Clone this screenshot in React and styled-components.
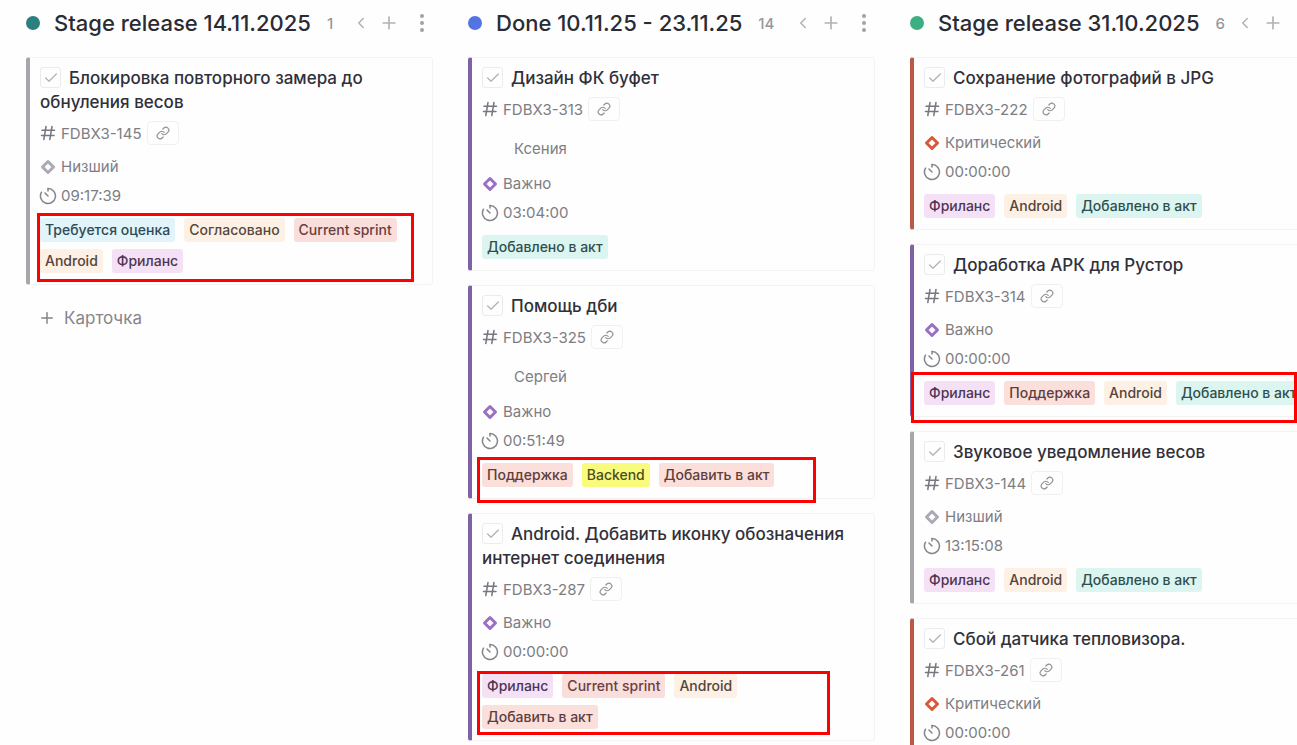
import React from 'react';
import styled, { createGlobalStyle } from 'styled-components';
import { Check, ChevronLeft, Link, Plus } from 'lucide-react';

const priorities = {
  lowest: { label: 'Низший', color: '#a9aab4', bar: '#a6a6ab' },
  important: { label: 'Важно', color: '#9a6fc4', bar: '#7f62a6' },
  critical: { label: 'Критический', color: '#d9583a', bar: '#b95a45' }
};

const tagStyles = {
  'Требуется оценка': { background: '#e0f4fa', color: '#2f4a55' },
  'Согласовано': { background: '#fdf1e6', color: '#57483c' },
  'Current sprint': { background: '#f9dedb', color: '#6b4040' },
  'Android': { background: '#fdf0e4', color: '#54443a' },
  'Фриланс': { background: '#f5e1f6', color: '#4d3554' },
  'Добавлено в акт': { background: '#dcf5f1', color: '#2f4f4c' },
  'Поддержка': { background: '#fadfdb', color: '#5e3d3b' },
  'Backend': { background: '#f8fb7c', color: '#4c4d22' },
  'Добавить в акт': { background: '#fadfdb', color: '#5e3d3b' }
};

const columns = [
  {
    title: 'Stage release 14.11.2025',
    color: '#2c7f7f',
    count: 1,
    addCard: true,
    cards: [
      {
        id: 'FDBX3-145',
        title: 'Блокировка повторного замера до обнуления весов',
        priority: 'lowest',
        time: '09:17:39',
        tags: ['Требуется оценка', 'Согласовано', 'Current sprint', 'Android', 'Фриланс'],
        mark: { top: -5, left: -3, width: 377, height: 69 }
      }
    ]
  },
  {
    title: 'Done 10.11.25 - 23.11.25',
    color: '#5474e4',
    count: 14,
    cards: [
      {
        id: 'FDBX3-313',
        title: 'Дизайн ФК буфет',
        person: 'Ксения',
        priority: 'important',
        time: '03:04:00',
        tags: ['Добавлено в акт']
      },
      {
        id: 'FDBX3-325',
        title: 'Помощь дби',
        person: 'Сергей',
        priority: 'important',
        time: '00:51:49',
        tags: ['Поддержка', 'Backend', 'Добавить в акт'],
        mark: { top: -6, left: -5, width: 339, height: 46 }
      },
      {
        id: 'FDBX3-287',
        title: 'Android. Добавить иконку обозначения интернет соединения',
        priority: 'important',
        time: '00:00:00',
        tags: ['Фриланс', 'Current sprint', 'Android', 'Добавить в акт'],
        mark: { top: -3, left: -5, width: 353, height: 64 }
      }
    ]
  },
  {
    title: 'Stage release 31.10.2025',
    color: '#3dae82',
    count: 6,
    cards: [
      {
        id: 'FDBX3-222',
        title: 'Сохранение фотографий в JPG',
        priority: 'critical',
        time: '00:00:00',
        tags: ['Фриланс', 'Android', 'Добавлено в акт']
      },
      {
        id: 'FDBX3-314',
        title: 'Доработка АРК для Рустор',
        priority: 'important',
        time: '00:00:00',
        tags: ['Фриланс', 'Поддержка', 'Android', 'Добавлено в акт'],
        mark: { top: -9, left: -13, width: 386, height: 51 }
      },
      {
        id: 'FDBX3-144',
        title: 'Звуковое уведомление весов',
        priority: 'lowest',
        time: '13:15:08',
        tags: ['Фриланс', 'Android', 'Добавлено в акт']
      },
      {
        id: 'FDBX3-261',
        title: 'Сбой датчика тепловизора.',
        priority: 'critical',
        time: '00:00:00',
        tags: []
      }
    ]
  }
];

const HashIcon = () => (
  <svg width="16" height="16" viewBox="0 0 16 16" fill="none" stroke="#77777f" strokeWidth="1.5" strokeLinecap="round">
    <path d="M6 1.500 3.800 14.500M12 1.500 9.800 14.500M2 5.200h12.500M1.500 10.600H14" />
  </svg>
);

const PriorityIcon = ({ color }) => (
  <svg width="16" height="16" viewBox="0 0 16 16" fill="none" stroke={color} strokeWidth="3" strokeLinejoin="round">
    <path d="M8 2.500 13.500 8 8 13.500 2.500 8Z" />
  </svg>
);

const TimerIcon = () => (
  <svg width="18" height="18" viewBox="0 0 18 18" fill="none" stroke="#85858b" strokeWidth="1.5" strokeLinecap="round">
    <path d="M9 1.500A7.500 7.500 0 1 1 2.500 5.200" />
    <path d="M9 1.500v2.500M9 9 6 6" />
  </svg>
);

const MoreIcon = () => (
  <svg width="6" height="20" viewBox="0 0 6 20" fill="#a2a2a6">
    <circle cx="3" cy="3" r="2" />
    <circle cx="3" cy="10" r="2" />
    <circle cx="3" cy="17" r="2" />
  </svg>
);

class Card extends React.Component {
  render() {
    const { id, title, person, priority, time, tags, mark } = this.props.card;
    const level = priorities[priority];

    return (
      <StyledCard $bar={ level.bar }>
        <CardTitle>
          <CheckWrap>
            <CheckInput type="checkbox" id={ id } />
            <Check size={ 16 } color="#b4b4b4" strokeWidth={ 2 } />
          </CheckWrap>
          <label htmlFor={ id }>{ title }</label>
        </CardTitle>
        <IdRow>
          <IconCell><HashIcon /></IconCell>
          <span>{ id }</span>
          <LinkButton type="button" aria-label="Скопировать ссылку">
            <Link size={ 14 } color="#909096" strokeWidth={ 2 } />
          </LinkButton>
        </IdRow>
        { person && <PersonRow>{ person }</PersonRow> }
        <InfoRow>
          <IconCell><PriorityIcon color={ level.color } /></IconCell>
          <span>{ level.label }</span>
        </InfoRow>
        <InfoRow>
          <IconCell><TimerIcon /></IconCell>
          <span>{ time }</span>
        </InfoRow>
        <Tags>
          { tags.map(tag => (
            <Tag key={ tag } $background={ tagStyles[tag].background } $color={ tagStyles[tag].color }>{ tag }</Tag>
          )) }
          { mark && <Mark $top={ mark.top } $left={ mark.left } $width={ mark.width } $height={ mark.height } /> }
        </Tags>
      </StyledCard>
    )
  }
}

class Column extends React.Component {
  render() {
    const { title, color, count, cards, addCard } = this.props.column;

    return (
      <StyledColumn>
        <ColumnHeader>
          <Dot $color={ color } />
          <ColumnTitle>{ title }</ColumnTitle>
          <Count>{ count }</Count>
          <Actions>
            <IconButton type="button" aria-label="Свернуть"><ChevronLeft size={ 18 } strokeWidth={ 2 } /></IconButton>
            <IconButton type="button" aria-label="Добавить"><Plus size={ 20 } strokeWidth={ 2 } /></IconButton>
            <IconButton type="button" aria-label="Меню"><MoreIcon /></IconButton>
          </Actions>
        </ColumnHeader>
        <CardList>
          { cards.map(card => <Card key={ card.id } card={ card } />) }
        </CardList>
        { addCard && (
          <AddCard type="button">
            <Plus size={ 18 } strokeWidth={ 2 } />
            Карточка
          </AddCard>
        ) }
      </StyledColumn>
    )
  }
}

const App = () => (
  <React.Fragment>
    <GlobalStyle />
    <Board>
      { columns.map(column => <Column key={ column.title } column={ column } />) }
    </Board>
  </React.Fragment>
);

const GlobalStyle = createGlobalStyle`
  * {
    box-sizing: border-box;
  }

  body {
    margin: 0;
    background: #fefefe;
    font-family: Inter, "Liberation Sans", sans-serif;
    overflow: hidden;
  }

  button {
    font-family: inherit;
    cursor: pointer;
  }
`;

const Board = styled.main`
  display: grid;
  grid-template-columns: repeat(3, minmax(407px, 31%));
  column-gap: 35px;
  height: 100vh;
  padding: 0 26px;
  overflow: hidden;
`;

const StyledColumn = styled.section`
  min-width: 0;
`;

const ColumnHeader = styled.header`
  display: flex;
  align-items: center;
  height: 46px;
  margin-bottom: 11px;
`;

const Dot = styled.span`
  width: 14px;
  height: 14px;
  border-radius: 50%;
  background: ${props => props.$color};
`;

const ColumnTitle = styled.h2`
  margin: 0 16px 0 14px;
  font-size: 22px;
  font-weight: 500;
  color: #2b2b33;
  white-space: nowrap;
`;

const Count = styled.span`
  font-size: 15px;
  font-weight: 500;
  color: #97979b;
`;

const Actions = styled.div`
  display: flex;
  align-items: center;
  margin-left: auto;
`;

const IconButton = styled.button`
  display: flex;
  align-items: center;
  justify-content: center;
  width: 28px;
  height: 28px;
  padding: 0;
  border: 0;
  background: none;
  color: #b2b2b6;

  &:last-child {
    width: 22px;
    margin-left: 8px;
  }
`;

const CardList = styled.div`
  display: grid;
  gap: 14px;
`;

const StyledCard = styled.article`
  padding: 8px 14px 11px 10px;
  border: 1px solid #f3f3f3;
  border-left: 4px solid ${props => props.$bar};
  border-radius: 3px;
  background: #fefefe;
`;

const CardTitle = styled.h3`
  margin: 0;
  font-size: 17px;
  font-weight: 500;
  line-height: 24px;
  color: #30303a;
`;

const CheckWrap = styled.span`
  position: relative;
  display: inline-flex;
  align-items: center;
  justify-content: center;
  width: 21px;
  height: 23px;
  margin-right: 8px;
  vertical-align: top;

  & > svg {
    position: absolute;
    pointer-events: none;
  }
`;

const CheckInput = styled.input`
  appearance: none;
  width: 21px;
  height: 21px;
  margin: 0;
  border: 1px solid #ebebeb;
  border-radius: 3px;
`;

const InfoRow = styled.div`
  display: flex;
  align-items: center;
  height: 29px;
  font-size: 15px;
  color: #7d7d83;
`;

const IdRow = styled(InfoRow)`
  height: 38px;
`;

const PersonRow = styled(InfoRow)`
  height: 41px;
  padding-left: 32px;
`;

const IconCell = styled.span`
  display: flex;
  justify-content: center;
  width: 16px;
  margin-right: 5px;

  & > svg {
    flex: none;
  }
`;

const LinkButton = styled.button`
  display: flex;
  align-items: center;
  justify-content: center;
  width: 32px;
  height: 24px;
  margin-left: 5px;
  padding: 0;
  border: 1px solid #f0f0f0;
  border-radius: 4px;
  background: none;
`;

const Tags = styled.div`
  position: relative;
  display: flex;
  flex-wrap: wrap;
  gap: 7px 9px;
  min-height: 24px;
  margin-top: 8px;
`;

const Tag = styled.span`
  padding: 0 5px;
  border-radius: 3px;
  font-size: 14px;
  font-weight: 500;
  line-height: 24px;
  white-space: nowrap;
  background: ${props => props.$background};
  color: ${props => props.$color};
`;

const Mark = styled.span`
  position: absolute;
  top: ${props => props.$top}px;
  left: ${props => props.$left}px;
  width: ${props => props.$width}px;
  height: ${props => props.$height}px;
  border: 3px solid #fe0000;
  pointer-events: none;
`;

const AddCard = styled.button`
  display: flex;
  align-items: center;
  gap: 8px;
  margin: 21px 0 0 12px;
  padding: 0;
  border: 0;
  background: none;
  font-size: 17px;
  line-height: 24px;
  color: #85858b;
`;

export default App;
